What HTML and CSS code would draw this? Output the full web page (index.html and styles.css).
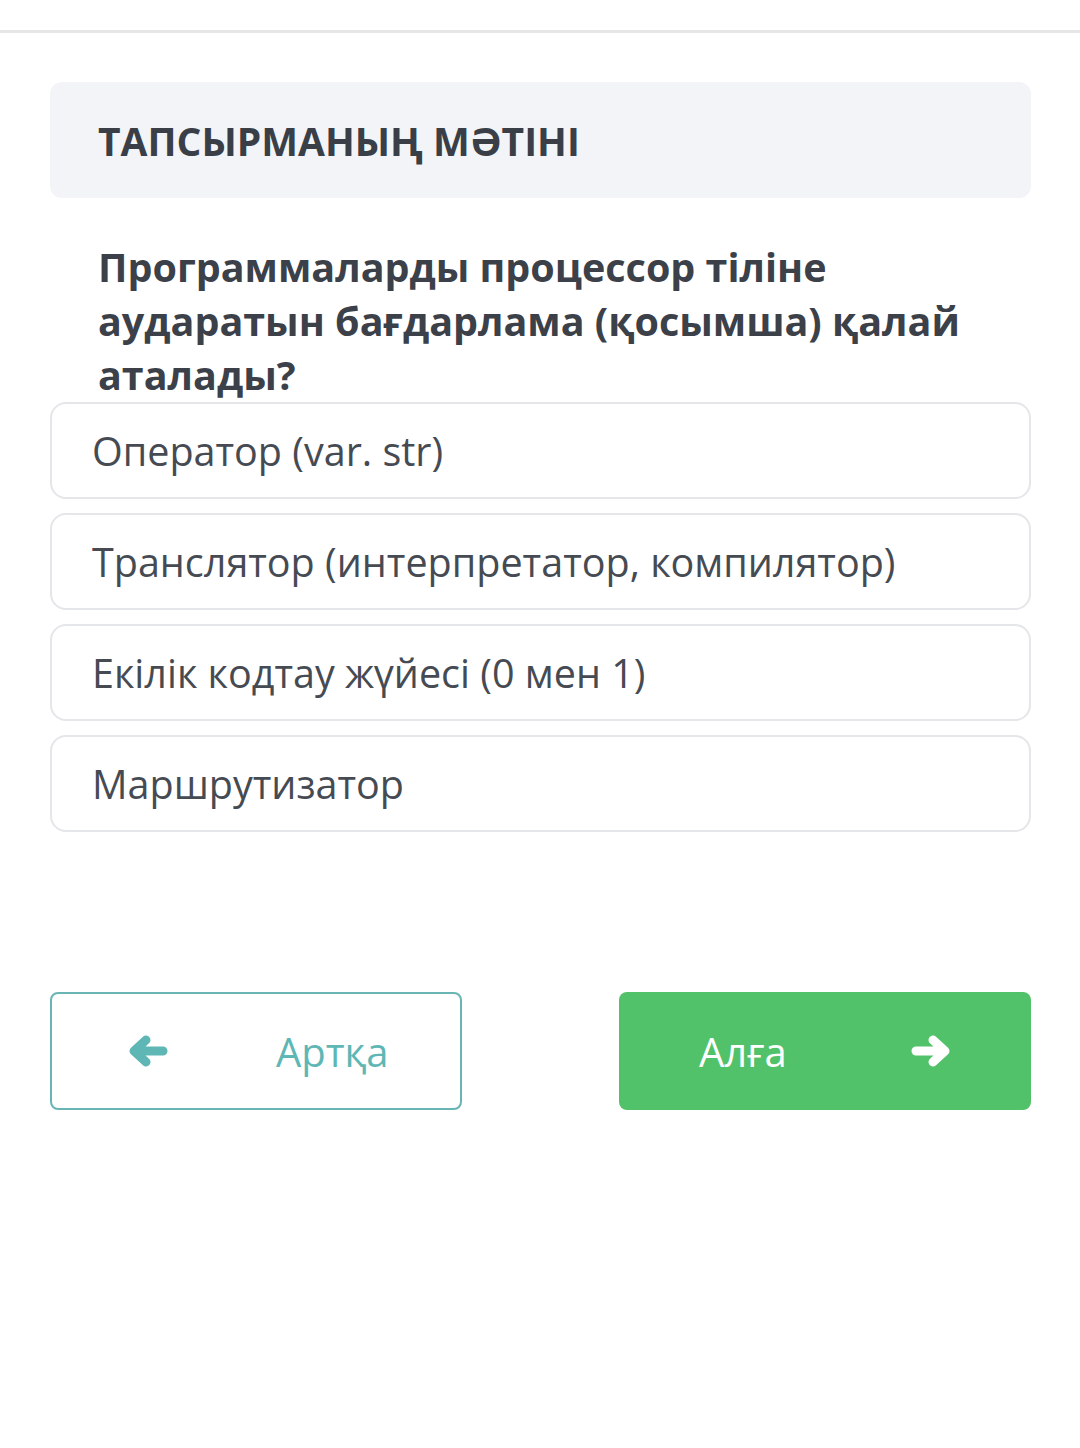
FILE: index.html
```html
<!DOCTYPE html>
<html lang="kk">
<head>
    <meta charset="UTF-8">
    <meta name="viewport" content="width=device-width, initial-scale=1.0">
    <title>Тапсырма</title>
    <link rel="stylesheet" href="styles.css">
</head>
<body>
    <div class="topbar"></div>
    <div class="page">
        <div class="task-head">ТАПСЫРМАНЫҢ МӘТІНІ</div>
        <div class="question">Программаларды процессор тіліне аударатын бағдарлама (қосымша) қалай аталады?</div>
        <div class="answers">
            <div class="answer">Оператор (var. str)</div>
            <div class="answer">Транслятор (интерпретатор, компилятор)</div>
            <div class="answer">Екілік кодтау жүйесі (0 мен 1)</div>
            <div class="answer">Маршрутизатор</div>
        </div>
        <div class="nav">
            <button class="nav-btn back">
                <svg class="arrow" width="40" height="34" viewBox="0 0 40 34">
                    <path d="M35 17 H7 M18 6 L6 17 L18 28" fill="none" stroke="currentColor" stroke-width="9" stroke-linecap="round" stroke-linejoin="round"/>
                </svg>
                <span>Артқа</span>
            </button>
            <button class="nav-btn next">
                <span>Алға</span>
                <svg class="arrow" width="40" height="34" viewBox="0 0 40 34">
                    <path d="M5 17 H33 M22 6 L34 17 L22 28" fill="none" stroke="currentColor" stroke-width="9" stroke-linecap="round" stroke-linejoin="round"/>
                </svg>
            </button>
        </div>
    </div>
</body>
</html>
```

FILE: styles.css
```css
body {
    margin: 0;
    background: #fff;
    font-family: 'Open Sans', 'Noto Sans', sans-serif;
    color: #3d424a;
}
.topbar {
    height: 30px;
    border-bottom: 3px solid #e6e6e6;
}
.page {
    padding: 49px 49px 0 50px;
}
.task-head {
    background: #f3f4f7;
    border-radius: 12px;
    padding: 33px 48px 31px;
    font-size: 39px;
    font-weight: 700;
    line-height: 52px;
    color: #3a3f47;
}
.question {
    padding: 42px 60px 0 48px;
    font-size: 39.5px;
    font-weight: 700;
    line-height: 54px;
    color: #3c4149;
}
.answers {
    display: flex;
    flex-direction: column;
    gap: 14px;
    margin-top: 0;
}
.answer {
    border: 2px solid #e4e6e9;
    border-radius: 16px;
    height: 93px;
    display: flex;
    align-items: center;
    padding: 0 40px;
    font-size: 39.5px;
    color: #464b53;
}
.nav {
    display: flex;
    justify-content: space-between;
    margin-top: 160px;
}
.nav-btn {
    width: 412px;
    height: 118px;
    border-radius: 8px;
    font-family: inherit;
    font-size: 40px;
    display: flex;
    align-items: center;
    box-sizing: border-box;
}
.back {
    background: #fff;
    border: 2px solid #69b5b4;
    color: #5eb7b4;
    padding: 0 0 0 76px;
}
.back span {
    margin-left: 108px;
}
.next {
    background: #52c26a;
    border: none;
    color: #fff;
    padding: 0 0 0 80px;
}
.next .arrow {
    margin-left: 124px;
}
```
